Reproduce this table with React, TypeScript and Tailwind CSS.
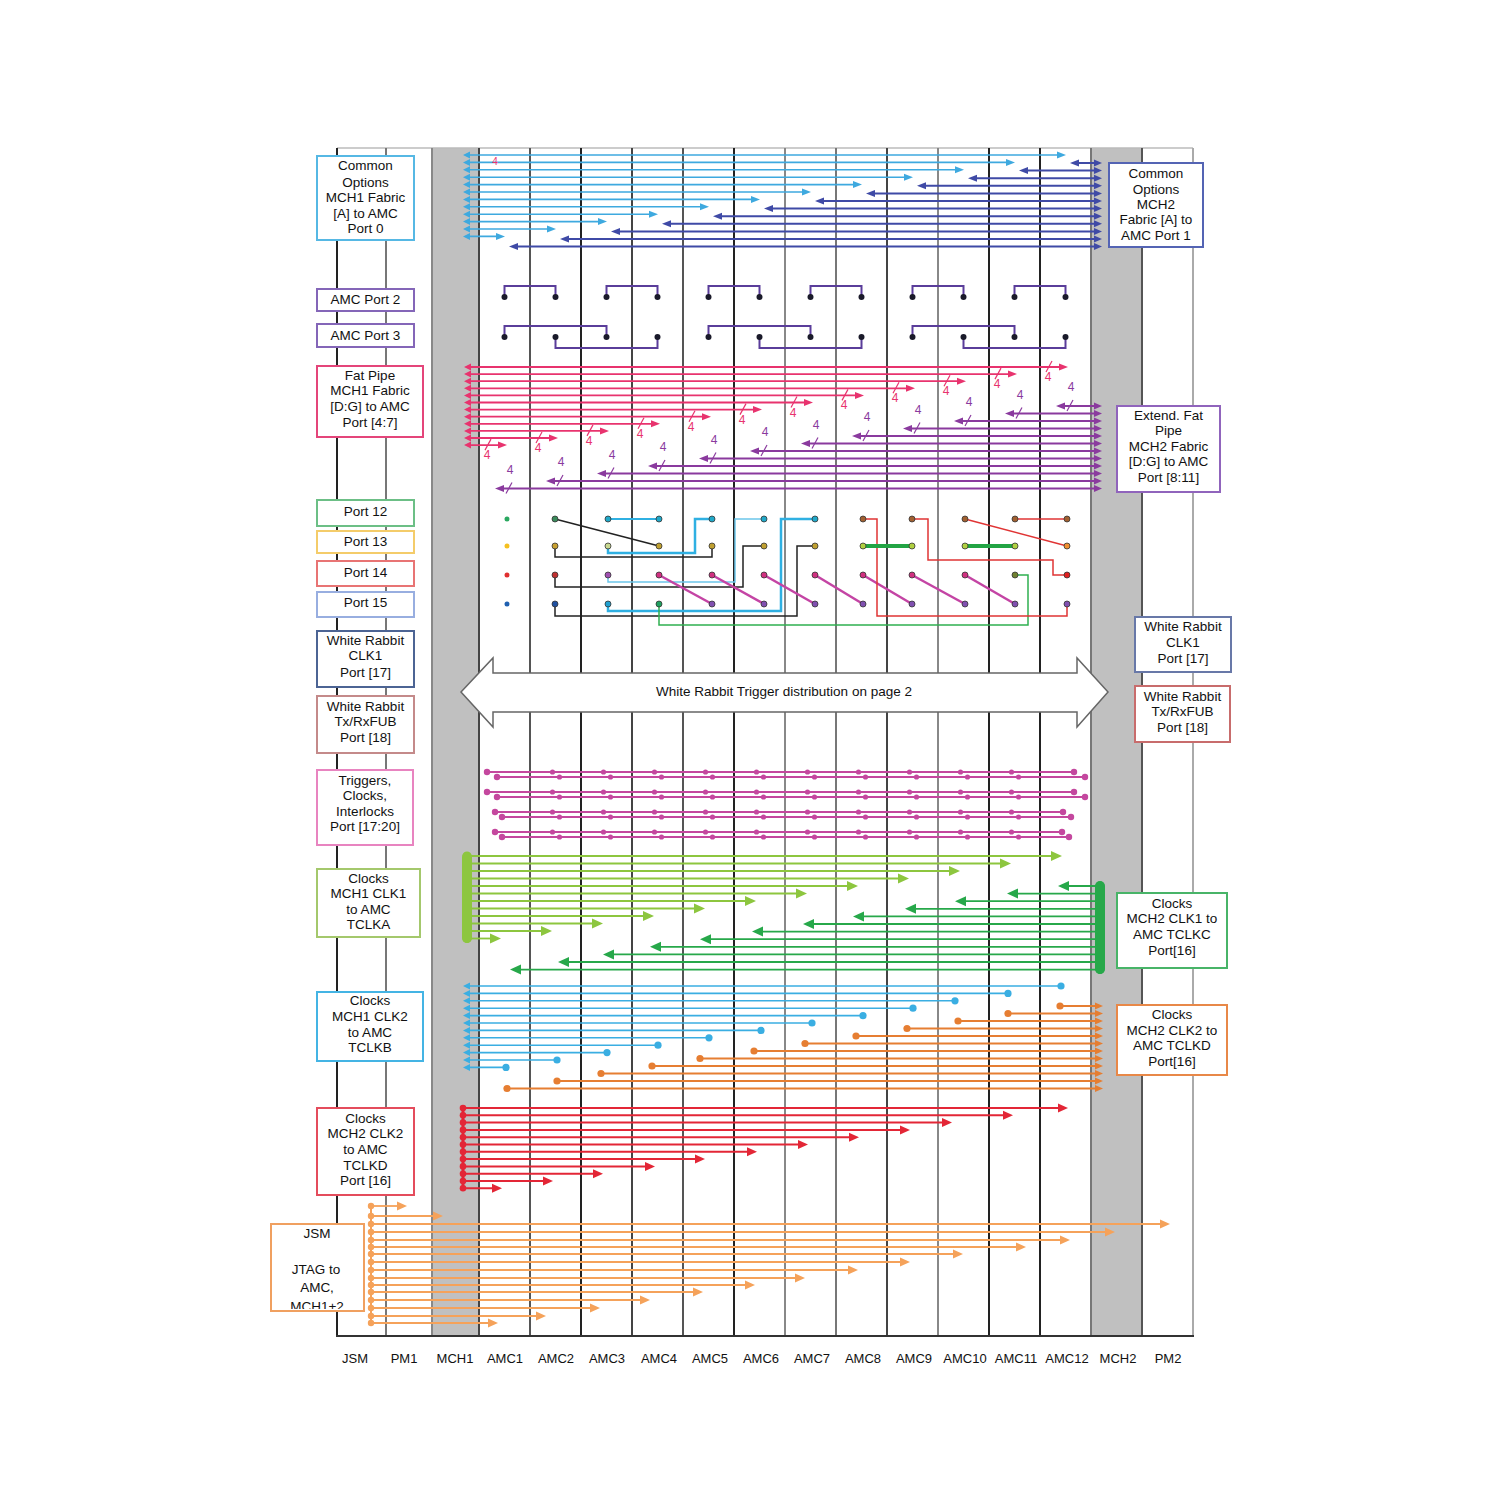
import React from "react";

const FONT = '"Liberation Sans", Arial, Helvetica, sans-serif';

// column boundaries: JSM, PM1, MCH1, AMC1..AMC12, MCH2, PM2
const COLS = [337, 386, 432, 479, 530, 581, 632, 683, 734, 785, 836, 887, 938, 989, 1040, 1091, 1142, 1193];
const COL_STROKE = [
  "#222", "#777", "#888", "#444", "#555", "#222", "#444", "#555", "#222",
  "#888", "#777", "#444", "#888", "#222", "#222", "#777", "#555", "#aaa",
];

const SLOTS = [
  ["JSM", 355], ["PM1", 404], ["MCH1", 455], ["AMC1", 505], ["AMC2", 556], ["AMC3", 607],
  ["AMC4", 659], ["AMC5", 710], ["AMC6", 761], ["AMC7", 812], ["AMC8", 863], ["AMC9", 914],
  ["AMC10", 965], ["AMC11", 1016], ["AMC12", 1067], ["MCH2", 1118], ["PM2", 1168],
] as const;

const K = Array.from({ length: 12 }, (_, i) => i);

type HeadProps = { x: number; y: number; c: string; l?: number; w?: number };

const HeadR = ({ x, y, c, l = 9, w = 3.5 }: HeadProps) => (
  <polygon points={`${x},${y} ${x - l},${y - w} ${x - l},${y + w}`} fill={c} />
);

const HeadL = ({ x, y, c, l = 9, w = 3.5 }: HeadProps) => (
  <polygon points={`${x},${y} ${x + l},${y - w} ${x + l},${y + w}`} fill={c} />
);

interface BoxDef {
  x: number;
  y: number;
  w: number;
  h: number;
  c: string;
  t: string[];
  ty: number[];
}

const LEFT_BOXES: BoxDef[] = [
  { x: 317, y: 156, w: 97, h: 84, c: "#56b8e4", t: ["Common", "Options", "MCH1 Fabric", "[A] to AMC", "Port 0"], ty: [165, 182, 197, 213, 228] },
  { x: 317, y: 289, w: 97, h: 22, c: "#8466b8", t: ["AMC Port 2"], ty: [299] },
  { x: 317, y: 324, w: 97, h: 23, c: "#8466b8", t: ["AMC Port 3"], ty: [335] },
  { x: 317, y: 366, w: 106, h: 71, c: "#e4457a", t: ["Fat Pipe", "MCH1 Fabric", "[D:G] to AMC", "Port [4:7]"], ty: [375, 390, 406, 422] },
  { x: 317, y: 500, w: 97, h: 26, c: "#6cbf86", t: ["Port 12"], ty: [511] },
  { x: 317, y: 531, w: 97, h: 22, c: "#f4cc6a", t: ["Port 13"], ty: [541] },
  { x: 317, y: 561, w: 97, h: 25, c: "#e87474", t: ["Port 14"], ty: [572] },
  { x: 317, y: 592, w: 97, h: 25, c: "#98aee0", t: ["Port 15"], ty: [602] },
  { x: 317, y: 631, w: 97, h: 56, c: "#4c6494", t: ["White Rabbit", "CLK1", "Port [17]"], ty: [640, 655, 672] },
  { x: 317, y: 696, w: 97, h: 57, c: "#c48a8a", t: ["White Rabbit", "Tx/RxFUB", "Port [18]"], ty: [706, 721, 737] },
  { x: 317, y: 770, w: 96, h: 75, c: "#e884c0", t: ["Triggers,", "Clocks,", "Interlocks", "Port [17:20]"], ty: [780, 795, 811, 826] },
  { x: 317, y: 869, w: 103, h: 68, c: "#a4c86c", t: ["Clocks", "MCH1 CLK1", "to AMC", "TCLKA"], ty: [878, 893, 909, 924] },
  { x: 317, y: 992, w: 106, h: 69, c: "#44b4e4", t: ["Clocks", "MCH1 CLK2", "to AMC", "TCLKB"], ty: [1000, 1016, 1032, 1047] },
  { x: 317, y: 1108, w: 97, h: 87, c: "#e44c5c", t: ["Clocks", "MCH2 CLK2", "to AMC", "TCLKD", "Port [16]"], ty: [1118, 1133, 1149, 1165, 1180] },
];

const RIGHT_BOXES: BoxDef[] = [
  { x: 1109, y: 163, w: 94, h: 84, c: "#5464b4", t: ["Common", "Options", "MCH2", "Fabric [A] to", "AMC Port 1"], ty: [173, 189, 204, 219, 235] },
  { x: 1117, y: 406, w: 103, h: 86, c: "#9064bc", t: ["Extend. Fat", "Pipe", "MCH2 Fabric", "[D:G] to AMC", "Port [8:11]"], ty: [415, 430, 446, 461, 477] },
  { x: 1135, y: 617, w: 96, h: 55, c: "#6878a8", t: ["White Rabbit", "CLK1", "Port [17]"], ty: [626, 642, 658] },
  { x: 1135, y: 686, w: 95, h: 56, c: "#c86c6c", t: ["White Rabbit", "Tx/RxFUB", "Port [18]"], ty: [696, 711, 727] },
  { x: 1117, y: 893, w: 110, h: 75, c: "#48b468", t: ["Clocks", "MCH2 CLK1 to", "AMC TCLKC", "Port[16]"], ty: [903, 918, 934, 950] },
  { x: 1117, y: 1005, w: 110, h: 70, c: "#e88848", t: ["Clocks", "MCH2 CLK2 to", "AMC TCLKD", "Port[16]"], ty: [1014, 1030, 1045, 1061] },
];

const Label = ({ b }: { b: BoxDef }) => (
  <g>
    <rect x={b.x} y={b.y} width={b.w} height={b.h} fill="#fff" stroke={b.c} strokeWidth={2} />
    {b.t.map((s, i) => (
      <text key={i} x={b.x + b.w / 2} y={b.ty[i] + 5} textAnchor="middle" fontSize={13.5} fill="#111" fontFamily={FONT}>
        {s}
      </text>
    ))}
  </g>
);

// Common options: MCH1 fabric A (blue) and MCH2 fabric A (indigo)
const CommonOptions = () => {
  const blue = "#3ea9df";
  const indigo = "#3f4aa6";
  return (
    <g>
      {K.map((k) => {
        const y = 155 + 7.4 * k;
        const end = 1066 - 51 * k;
        return (
          <g key={"b" + k}>
            <line x1={466} y1={y} x2={end - 6} y2={y} stroke={blue} strokeWidth={1.6} />
            <HeadR x={end} y={y} c={blue} />
            <HeadL x={463} y={y} c={blue} l={7} />
          </g>
        );
      })}
      {K.map((k) => {
        const y = 163 + 7.6 * k;
        const tip = 1070 - 51 * k;
        return (
          <g key={"i" + k}>
            <line x1={tip + 6} y1={y} x2={1096} y2={y} stroke={indigo} strokeWidth={2} />
            <HeadL x={tip} y={y} c={indigo} />
            <HeadR x={1102} y={y} c={indigo} l={8} />
          </g>
        );
      })}
      <text x={495} y={165} textAnchor="middle" fontSize={10} fill="#e8336e" fontFamily={FONT}>
        4
      </text>
    </g>
  );
};

// AMC port 2 / port 3 links between neighbours
const PortBrackets = () => {
  const c = "#5a3d9a";
  const cx = (i: number) => 504.5 + 51 * i;
  const top2 = [0, 2, 4, 6, 8, 10];
  const pairs3 = [0, 4, 8];
  return (
    <g stroke={c} strokeWidth={2} fill="none">
      {top2.map((i) => (
        <path key={"p2" + i} d={`M${cx(i)},297 V286 H${cx(i + 1)} V297`} />
      ))}
      {pairs3.map((i) => (
        <g key={"p3" + i}>
          <path d={`M${cx(i)},337 V326 H${cx(i + 2)} V337`} />
          <path d={`M${cx(i + 1)},337 V348 H${cx(i + 3)} V337`} />
        </g>
      ))}
      {K.map((i) => (
        <g key={"d" + i} stroke="none" fill="#1a1a2a">
          <circle cx={cx(i)} cy={297} r={3} />
          <circle cx={cx(i)} cy={337} r={3} />
        </g>
      ))}
    </g>
  );
};

// Fat pipe: MCH1 fabric D:G (pink) and MCH2 fabric D:G (purple)
const FatPipe = () => {
  const pink = "#e8336e";
  const purple = "#8a3a9e";
  return (
    <g>
      {K.map((k) => {
        const y = 367 + 7.1 * k;
        const end = 1068 - 51 * k;
        return (
          <g key={"p" + k}>
            <line x1={467} y1={y} x2={end - 6} y2={y} stroke={pink} strokeWidth={1.8} />
            <HeadR x={end} y={y} c={pink} />
            <HeadL x={464} y={y} c={pink} l={7} />
            <line x1={end - 22} y1={y + 5} x2={end - 16} y2={y - 6} stroke={pink} strokeWidth={1.2} />
            <text x={end - 20} y={y + 14} textAnchor="middle" fontSize={12} fill={pink} fontFamily={FONT}>
              4
            </text>
          </g>
        );
      })}
      {K.map((k) => {
        const y = 406 + 7.5 * k;
        const tip = 1056 - 51 * k;
        return (
          <g key={"m" + k}>
            <line x1={tip + 6} y1={y} x2={1096} y2={y} stroke={purple} strokeWidth={2} />
            <HeadL x={tip} y={y} c={purple} />
            <HeadR x={1102} y={y} c={purple} l={8} />
            <line x1={tip + 11} y1={y + 5} x2={tip + 17} y2={y - 6} stroke={purple} strokeWidth={1.2} />
            <text x={tip + 15} y={y - 15} textAnchor="middle" fontSize={12} fill={purple} fontFamily={FONT}>
              4
            </text>
          </g>
        );
      })}
    </g>
  );
};

// Ports 12-15 point-to-point links
const PX = [507, 555, 608, 659, 712, 764, 815, 863, 912, 965, 1015, 1067];
const PY = [519, 546, 575, 604];
const DOTS: string[][] = [
  ["#2aa860", "#f5c020", "#e03030", "#2060b0"],
  ["#3a8a5a", "#c8a030", "#c03030", "#2050a0"],
  ["#20a8c8", "#c8d890", "#a050b0", "#20a0d0"],
  ["#20a8c8", "#c0a030", "#d03080", "#20a060"],
  ["#20a8c8", "#c0a030", "#d03080", "#8050b0"],
  ["#20a8c8", "#c0a030", "#d03080", "#8050b0"],
  ["#20a8c8", "#c0a030", "#d03080", "#8050b0"],
  ["#a06030", "#b0d040", "#d03080", "#8050b0"],
  ["#a06030", "#b0d040", "#d03080", "#8050b0"],
  ["#a06030", "#b0d040", "#d03080", "#8050b0"],
  ["#a06030", "#b0d040", "#708030", "#8050b0"],
  ["#a06030", "#f09030", "#e02020", "#8050b0"],
];

const Ports = () => (
  <g fill="none">
    <g stroke="#222" strokeWidth={1.5}>
      <line x1={555} y1={519} x2={659} y2={546} />
      <path d="M555,546 V557 H712 V546" />
      <path d="M555,575 V587 H743 V546 H764" />
      <path d="M555,604 V616 H797 V546 H815" />
    </g>
    <g stroke="#2fb0e2">
      <path d="M608,519 H659" strokeWidth={2} />
      <path d="M608,546 V553 H695 V519 H712" strokeWidth={2.5} />
      <path d="M608,575 V582 H735 V519 H764" strokeWidth={1.5} stroke="#6cc6ea" />
      <path d="M608,604 V611 H781 V519 H815" strokeWidth={2.5} />
    </g>
    <g stroke="#c444a4" strokeWidth={2.5}>
      {[3, 4, 5, 6, 7, 8, 9].map((i) => (
        <line key={i} x1={PX[i]} y1={575} x2={PX[i + 1]} y2={604} />
      ))}
    </g>
    <path d="M659,604 V625 H1028 V575 H1015" stroke="#2fb050" strokeWidth={1.5} />
    <g stroke="#e03434" strokeWidth={1.5}>
      <path d="M863,519 H877 V616 H1067 V604" />
      <path d="M912,519 H928 V560 H1053 V575 H1067" />
      <line x1={965} y1={519} x2={1067} y2={546} />
      <line x1={1015} y1={519} x2={1067} y2={519} />
    </g>
    <g stroke="#22a444" strokeWidth={4}>
      <line x1={863} y1={546} x2={912} y2={546} />
      <line x1={965} y1={546} x2={1015} y2={546} />
    </g>
    {PX.map((x, i) =>
      PY.map((y, j) => (
        <circle
          key={i + "-" + j}
          cx={x}
          cy={y}
          r={i === 0 ? 2.5 : 3}
          fill={DOTS[i][j]}
          stroke={i === 0 ? "none" : "#333"}
          strokeWidth={0.8}
        />
      ))
    )}
  </g>
);

const WhiteRabbitArrow = () => (
  <g>
    <polygon
      points="461,692 493,658 493,673 1077,673 1077,658 1108,692 1077,727 1077,712 493,712 493,727"
      fill="#fff"
      stroke="#666"
      strokeWidth={1.5}
      strokeLinejoin="miter"
    />
    <text x={784} y={696} textAnchor="middle" fontSize={13.5} fill="#111" fontFamily={FONT}>
      White Rabbit Trigger distribution on page 2
    </text>
  </g>
);

// Triggers, clocks, interlocks bus lines
const TRIG = [
  { y: 772, x0: 487, x1: 1074, off: -3 },
  { y: 777, x0: 497, x1: 1085, off: 4 },
  { y: 792, x0: 487, x1: 1074, off: -3 },
  { y: 797, x0: 497, x1: 1085, off: 4 },
  { y: 812, x0: 495, x1: 1063, off: -3 },
  { y: 817, x0: 502, x1: 1071, off: 4 },
  { y: 832, x0: 495, x1: 1062, off: -3 },
  { y: 837, x0: 502, x1: 1069, off: 4 },
];

const Triggers = () => {
  const c = "#c4479e";
  return (
    <g>
      {TRIG.map((t, i) => (
        <g key={i} fill={c}>
          <line x1={t.x0} y1={t.y} x2={t.x1} y2={t.y} stroke={c} strokeWidth={2} />
          <circle cx={t.x0} cy={t.y} r={3.2} />
          <circle cx={t.x1} cy={t.y} r={3.2} />
          {K.slice(1, 11).map((k) => (
            <circle key={k} cx={504.5 + 51 * k + t.off} cy={t.y} r={2.6} />
          ))}
        </g>
      ))}
    </g>
  );
};

const ClockA = () => {
  const c = "#8dc63f";
  return (
    <g>
      {K.map((k) => {
        const y = 856 + 7.5 * k;
        const tip = 1062 - 51 * k;
        return (
          <g key={k}>
            <line x1={467} y1={y} x2={tip - 8} y2={y} stroke={c} strokeWidth={1.8} />
            <HeadR x={tip} y={y} c={c} l={11} w={5} />
            <circle cx={467} cy={y} r={4.5} fill={c} />
          </g>
        );
      })}
      <rect x={462} y={852} width={10} height={91} rx={5} fill={c} />
    </g>
  );
};

const CLKC_TIPS = [1058, 1007, 955, 905, 853, 803, 752, 700, 650, 603, 558, 510];

const ClockC = () => {
  const c = "#27a84a";
  return (
    <g>
      {K.map((k) => {
        const y = 886 + 7.6 * k;
        const tip = CLKC_TIPS[k];
        return (
          <g key={k}>
            <line x1={tip + 8} y1={y} x2={1100} y2={y} stroke={c} strokeWidth={1.8} />
            <HeadL x={tip} y={y} c={c} l={11} w={5} />
            <circle cx={1100} cy={y} r={4.5} fill={c} />
          </g>
        );
      })}
      <rect x={1095} y={881} width={10} height={93} rx={5} fill={c} />
    </g>
  );
};

const CLKB_DOTS = [1061, 1008, 955, 913, 863, 812, 761, 709, 658, 607, 557, 506];

const ClockB = () => {
  const c = "#3aaee2";
  return (
    <g>
      {K.map((k) => {
        const y = 986 + 7.4 * k;
        return (
          <g key={k} fill={c}>
            <line x1={468} y1={y} x2={CLKB_DOTS[k]} y2={y} stroke={c} strokeWidth={1.6} />
            <circle cx={CLKB_DOTS[k]} cy={y} r={3.6} />
            <HeadL x={463} y={y} c={c} l={7} />
          </g>
        );
      })}
    </g>
  );
};

const CLKD_DOTS = [1060, 1008, 958, 907, 856, 805, 754, 700, 652, 601, 557, 507];

const ClockD = () => {
  const c = "#e67e32";
  return (
    <g>
      {K.map((k) => {
        const y = 1006 + 7.5 * k;
        return (
          <g key={k} fill={c}>
            <line x1={CLKD_DOTS[k]} y1={y} x2={1096} y2={y} stroke={c} strokeWidth={1.8} />
            <circle cx={CLKD_DOTS[k]} cy={y} r={3.6} />
            <HeadR x={1103} y={y} c={c} l={8} />
          </g>
        );
      })}
    </g>
  );
};

const CLKD2_TIPS = [1068, 1013, 952, 910, 859, 808, 757, 705, 655, 603, 553, 502];

const ClockD2 = () => {
  const c = "#e32636";
  return (
    <g>
      <line x1={463} y1={1108} x2={463} y2={1189} stroke={c} strokeWidth={3} />
      {K.map((k) => {
        const y = 1108 + 7.3 * k;
        const tip = CLKD2_TIPS[k];
        return (
          <g key={k} fill={c}>
            <line x1={463} y1={y} x2={tip - 6} y2={y} stroke={c} strokeWidth={2} />
            <HeadR x={tip} y={y} c={c} l={10} w={4.5} />
            <circle cx={463} cy={y} r={3.3} />
          </g>
        );
      })}
    </g>
  );
};

const JTAG: [number, number][] = [
  [1206, 407], [1216, 443], [1224, 1170], [1232, 1115], [1240, 1070], [1247, 1026],
  [1254, 963], [1262, 910], [1270, 858], [1278, 805], [1285, 755], [1292, 703],
  [1300, 650], [1308, 600], [1316, 546], [1323, 498],
];

const Jtag = () => {
  const c = "#f5a25a";
  return (
    <g>
      <line x1={371} y1={1206} x2={371} y2={1323} stroke={c} strokeWidth={2} />
      {JTAG.map(([y, tip], i) => (
        <g key={i} fill={c}>
          <line x1={371} y1={y} x2={tip - 6} y2={y} stroke={c} strokeWidth={1.8} />
          <HeadR x={tip} y={y} c={c} l={10} w={4.5} />
          <circle cx={371} cy={y} r={3.2} />
        </g>
      ))}
    </g>
  );
};

const JsmBox = () => (
  <g>
    <defs>
      <clipPath id="jsmclip">
        <rect x={272} y={1225} width={91} height={84} />
      </clipPath>
    </defs>
    <rect x={271} y={1224} width={93} height={87} fill="#fff" stroke="#f0a060" strokeWidth={2} />
    <g clipPath="url(#jsmclip)" fontFamily={FONT} fontSize={13.5} fill="#111" textAnchor="middle">
      <text x={317} y={1238}>JSM</text>
      <text x={316} y={1274}>JTAG to</text>
      <text x={317} y={1292}>AMC,</text>
      <text x={317} y={1311}>MCH1+2</text>
    </g>
  </g>
);

export default function App() {
  return (
    <div className="flex h-[1500px] w-[1500px] items-start justify-start bg-white">
      <svg width={1500} height={1500} viewBox="0 0 1500 1500" className="block">
        <rect x={432} y={148} width={47} height={1188} fill="#c0c0c0" />
        <rect x={1091} y={148} width={51} height={1188} fill="#c0c0c0" />
        <line x1={337} y1={148} x2={1193} y2={148} stroke="#bbb" strokeWidth={1.5} />
        {COLS.map((x, i) => (
          <line key={x} x1={x} y1={148} x2={x} y2={1336} stroke={COL_STROKE[i]} strokeWidth={2} />
        ))}
        <line x1={336} y1={1336} x2={1194} y2={1336} stroke="#333" strokeWidth={2} />

        <CommonOptions />
        <PortBrackets />
        <FatPipe />
        <Ports />
        <WhiteRabbitArrow />
        <Triggers />
        <ClockA />
        <ClockC />
        <ClockB />
        <ClockD />
        <ClockD2 />
        <Jtag />

        {LEFT_BOXES.map((b, i) => (
          <Label key={"l" + i} b={b} />
        ))}
        {RIGHT_BOXES.map((b, i) => (
          <Label key={"r" + i} b={b} />
        ))}
        <JsmBox />

        {SLOTS.map(([name, x]) => (
          <text key={name} x={x} y={1363} textAnchor="middle" fontSize={13} fill="#111" fontFamily={FONT}>
            {name}
          </text>
        ))}
      </svg>
    </div>
  );
}
